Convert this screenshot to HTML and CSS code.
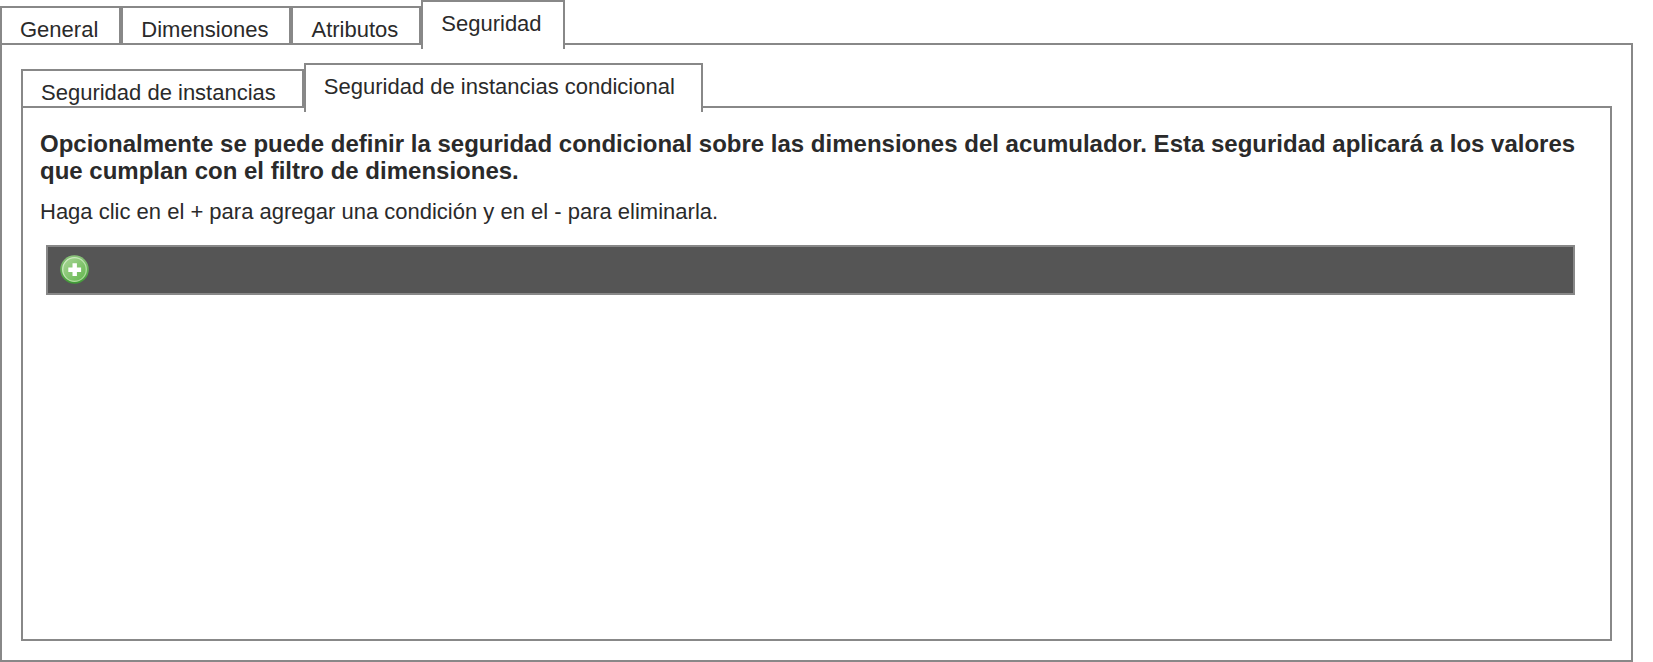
FILE: index.html
```html
<!DOCTYPE html>
<html lang="es">
<head>
<meta charset="utf-8">
<title>Seguridad</title>
<link rel="stylesheet" href="styles.css">
</head>
<body>
<main class="page">
  <div class="tabs" role="tablist" aria-label="Acumulador">
    <button class="tab" type="button" role="tab" aria-selected="false">General</button>
    <button class="tab" type="button" role="tab" aria-selected="false">Dimensiones</button>
    <button class="tab" type="button" role="tab" aria-selected="false">Atributos</button>
    <button class="tab tab-active" type="button" role="tab" aria-selected="true" id="tab-seguridad" aria-controls="panel-seguridad">Seguridad</button>
  </div>
  <section class="panel panel-outer" role="tabpanel" id="panel-seguridad" aria-labelledby="tab-seguridad">
    <div class="tabs" role="tablist" aria-label="Seguridad">
      <button class="tab tab-wide" type="button" role="tab" aria-selected="false">Seguridad de instancias</button>
      <button class="tab tab-wide tab-active" type="button" role="tab" aria-selected="true" id="tab-condicional" aria-controls="panel-condicional">Seguridad de instancias condicional</button>
    </div>
    <section class="panel panel-inner" role="tabpanel" id="panel-condicional" aria-labelledby="tab-condicional">
      <p class="intro">Opcionalmente se puede definir la seguridad condicional sobre las dimensiones del acumulador. Esta seguridad aplicará a los valores que cumplan con el filtro de dimensiones.</p>
      <p class="help">Haga clic en el + para agregar una condición y en el - para eliminarla.</p>
      <div class="toolbar">
        <button class="add" type="button" aria-label="Agregar condición">
          <svg class="add-icon" viewBox="0 0 29 29" aria-hidden="true">
            <defs>
              <linearGradient id="rim" x1="0" y1="0" x2="0" y2="1">
                <stop offset="0" stop-color="#8cc47c"/>
                <stop offset="1" stop-color="#3f9a35"/>
              </linearGradient>
              <linearGradient id="ring" x1="0" y1="0" x2="1" y2="1">
                <stop offset="0" stop-color="#d8f0cd"/>
                <stop offset="1" stop-color="#a2d88e"/>
              </linearGradient>
              <linearGradient id="face" x1="0" y1="0" x2="1" y2="1">
                <stop offset="0" stop-color="#a9d597"/>
                <stop offset="1" stop-color="#62b64c"/>
              </linearGradient>
            </defs>
            <circle cx="14.5" cy="14.5" r="14.3" fill="url(#rim)"/>
            <circle cx="14.5" cy="14.5" r="11.8" fill="url(#face)" stroke="url(#ring)" stroke-width="1.3"/>
            <path d="M12.5 8.3h4.4v4.2h4.2v4.4h-4.2v4.2h-4.4v-4.2h-4.2v-4.4h4.2z" fill="#fff"/>
          </svg>
        </button>
      </div>
    </section>
  </section>
</main>
</body>
</html>
```
FILE: styles.css
```css
* {
  box-sizing: border-box;
}

body {
  margin: 0;
  background: #fff;
  color: #2a2a2a;
  font-family: "Liberation Sans", Arial, sans-serif;
  font-size: 22px;
  line-height: 27px;
}

.page {
  display: flex;
  flex-direction: column;
  min-height: 100vh;
  padding-right: 20px;
}

.tabs {
  display: flex;
  align-items: flex-end;
  margin-bottom: -2px;
}

.tab {
  padding: 8px 21px 0 18px;
  border: 2px solid #888;
  background: #fff;
  color: inherit;
  font: inherit;
  white-space: nowrap;
}

.tab-wide {
  padding-right: 26px;
}

.tab-active {
  position: relative;
  margin-bottom: -4px;
  padding-bottom: 12px;
  border-bottom: 0;
}

.panel {
  display: flex;
  flex: 1;
  flex-direction: column;
  border: 2px solid #888;
}

.panel-outer {
  padding: 18px 19px 19px;
}

.panel-inner {
  padding: 22px 17px;
}

.intro {
  margin: 0 0 14px;
  font-size: 24px;
  font-weight: bold;
}

.help {
  margin: 0 0 20px;
}

.toolbar {
  display: flex;
  margin: 0 18px 0 6px;
  padding: 8px 12px 9px;
  border: 2px solid #888;
  background: #555;
}

.add {
  padding: 0;
  border: 0;
  background: none;
  cursor: pointer;
}

.add-icon {
  display: block;
  width: 29px;
  height: 29px;
}
```
